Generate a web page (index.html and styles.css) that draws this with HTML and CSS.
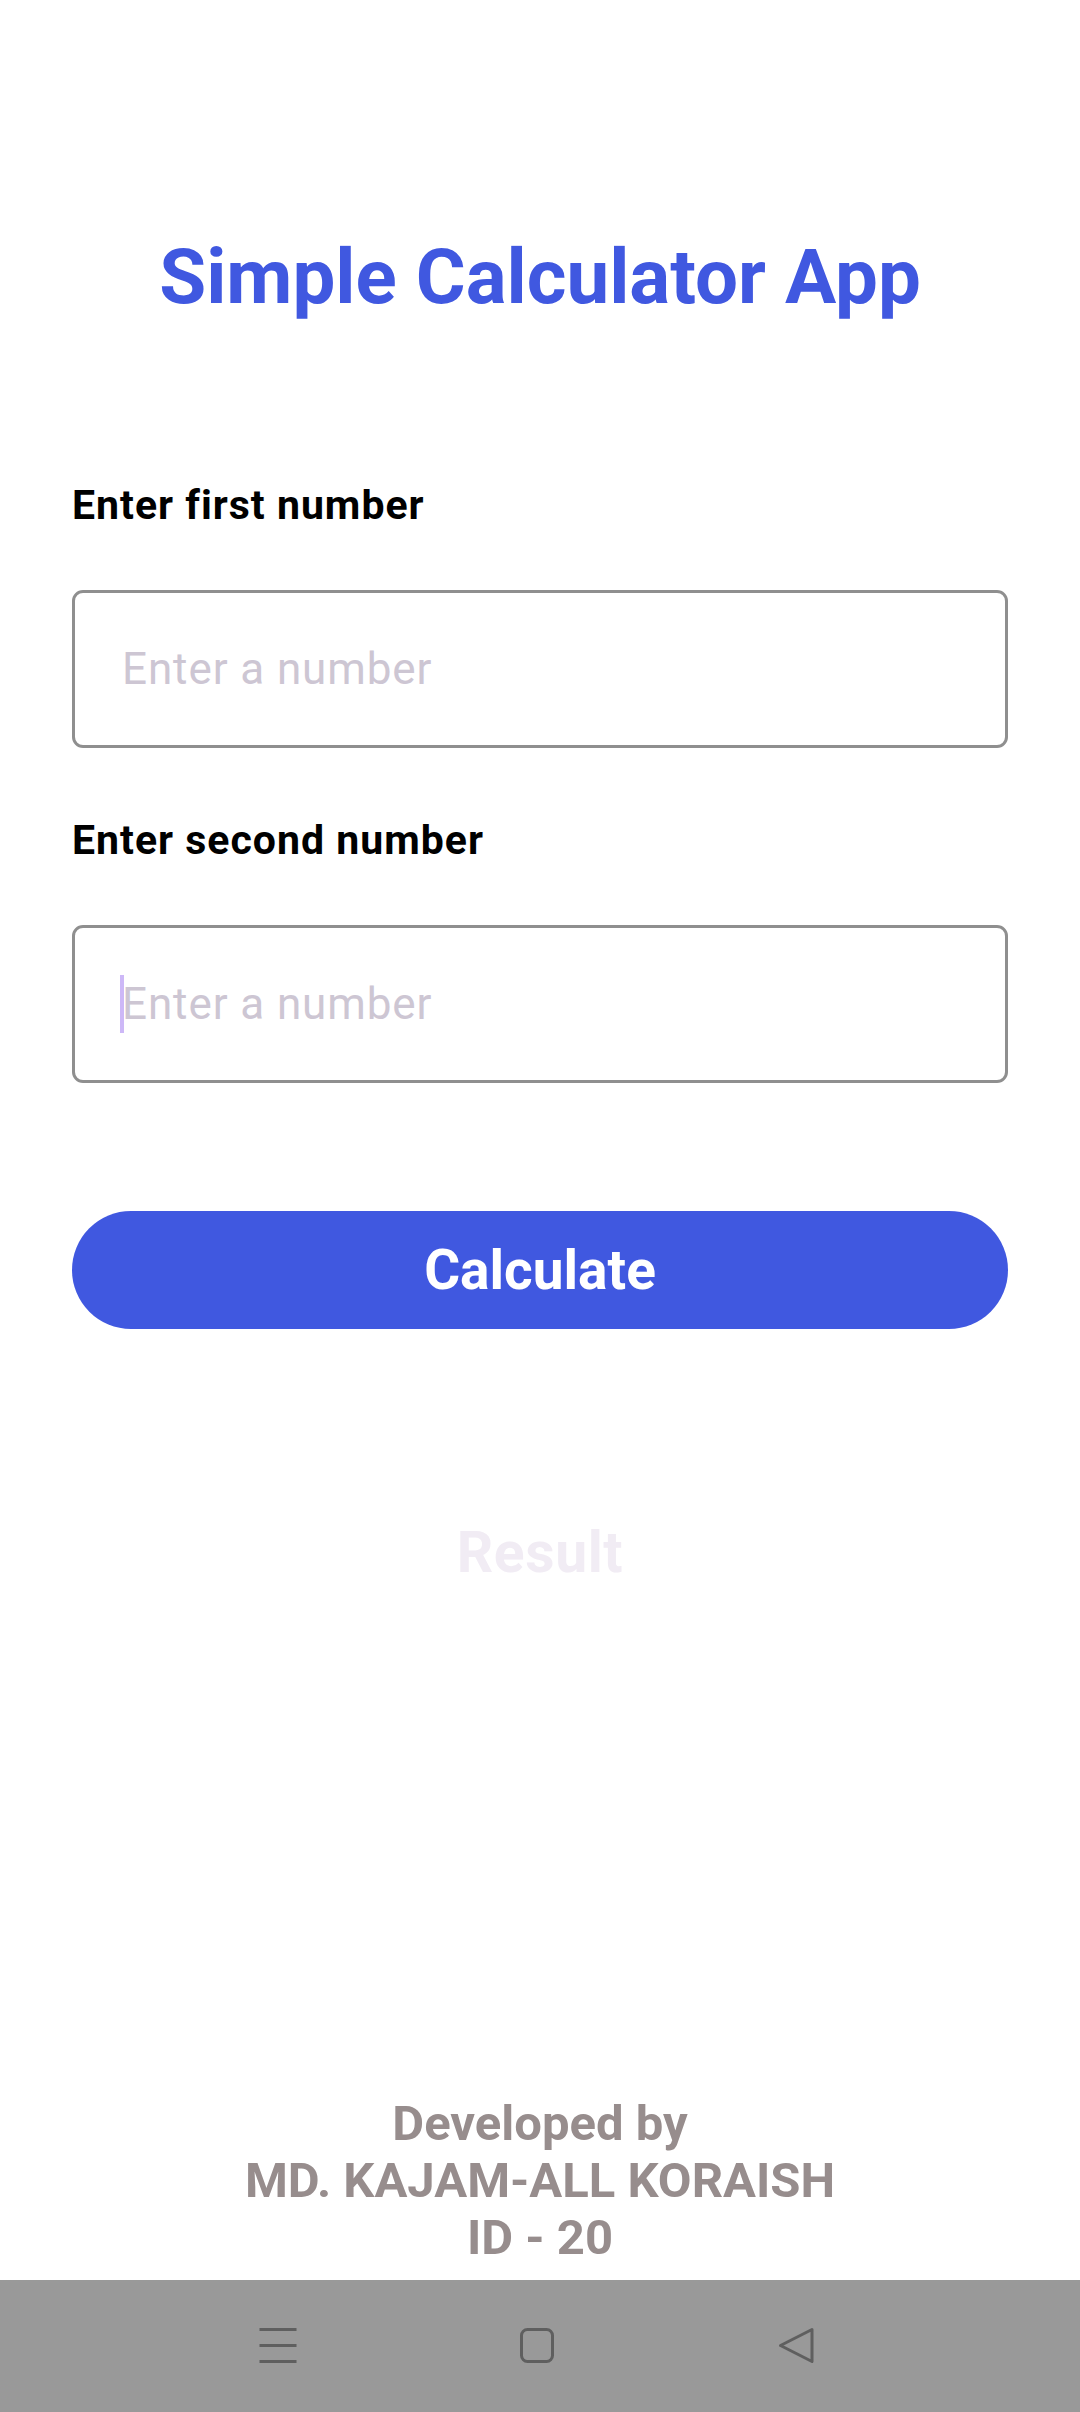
FILE: index.html
```html
<!DOCTYPE html>
<html lang="en">
<head>
<meta charset="utf-8">
<title>Simple Calculator App</title>
<link rel="stylesheet" href="styles.css">
</head>
<body>
<div class="screen">
  <main class="app">
    <h1 class="title">Simple Calculator App</h1>

    <label class="label label-first">Enter first number</label>
    <div class="field">
      <span class="placeholder">Enter a number</span>
    </div>

    <label class="label label-second">Enter second number</label>
    <div class="field">
      <span class="caret"></span><span class="placeholder">Enter a number</span>
    </div>

    <button class="calc-btn" type="button">Calculate</button>

    <div class="result">Result</div>

    <footer class="credits">
      <div>Developed by</div>
      <div>MD. KAJAM-ALL KORAISH</div>
      <div>ID - 20</div>
    </footer>
  </main>

  <nav class="navbar">
    <svg class="nav-icon" viewBox="0 0 60 60" width="60" height="60" aria-label="Menu">
      <path d="M11.5 13.5H48.5M11.5 29.5H48.5M11.5 45.5H48.5" stroke="#5f5f5f" stroke-width="3" fill="none"/>
    </svg>
    <svg class="nav-icon" viewBox="0 0 60 60" width="60" height="60" aria-label="Home">
      <rect x="14.5" y="13.5" width="31" height="32" rx="6" stroke="#5f5f5f" stroke-width="3" fill="none"/>
    </svg>
    <svg class="nav-icon" viewBox="0 0 60 60" width="60" height="60" aria-label="Back">
      <path d="M46 13.5 L14.5 29.5 L46 45.5 Z" stroke="#5f5f5f" stroke-width="3" stroke-linejoin="round" fill="none"/>
    </svg>
  </nav>
</div>
</body>
</html>
```

FILE: styles.css
```css
* {
  box-sizing: border-box;
}

html, body {
  margin: 0;
  padding: 0;
  background: #ffffff;
}

body {
  font-family: Roboto, "Noto Sans", "Liberation Sans", sans-serif;
}

.screen {
  width: 1080px;
  height: 2412px;
  display: flex;
  flex-direction: column;
}

.app {
  flex: 1;
  display: flex;
  flex-direction: column;
  padding: 0 72px 14px;
}

.title {
  margin: 232px 0 0;
  font-size: 76.3px;
  line-height: 90px;
  font-weight: 700;
  color: #4058e0;
  text-align: center;
}

.label {
  display: block;
  font-size: 41px;
  line-height: 48px;
  font-weight: 700;
  letter-spacing: 1px;
  color: #000000;
  margin-bottom: 61px;
}

.label-first {
  margin-top: 159px;
}

.label-second {
  margin-top: 68px;
}

.field {
  height: 158px;
  border: 3px solid #8f8f8f;
  border-radius: 11px;
  display: flex;
  align-items: center;
  padding-left: 47px;
}

.placeholder {
  font-size: 44px;
  line-height: 52px;
  color: #cdc6d3;
  letter-spacing: 0.9px;
}

.caret {
  display: inline-block;
  width: 4px;
  height: 58px;
  background: #cdb8f7;
  margin-left: -2px;
  margin-right: -2px;
}

.calc-btn {
  margin-top: 128px;
  height: 118px;
  border: none;
  border-radius: 59px;
  background: #4058e0;
  color: #ffffff;
  font-family: inherit;
  font-size: 55px;
  font-weight: 700;
  display: flex;
  align-items: center;
  justify-content: center;
  padding: 0;
}

.result {
  margin-top: 192px;
  font-size: 57px;
  line-height: 64px;
  font-weight: 700;
  letter-spacing: 0.6px;
  color: #f1ecf4;
  text-align: center;
}

.credits {
  margin-top: auto;
  font-size: 49px;
  line-height: 57px;
  font-weight: 700;
  color: #978d8d;
  text-align: center;
}

.navbar {
  height: 132px;
  background: #999999;
  display: flex;
  align-items: center;
  padding-left: 248px;
  gap: 199px;
}

.nav-icon {
  display: block;
  width: 60px;
  height: 60px;
}
```
